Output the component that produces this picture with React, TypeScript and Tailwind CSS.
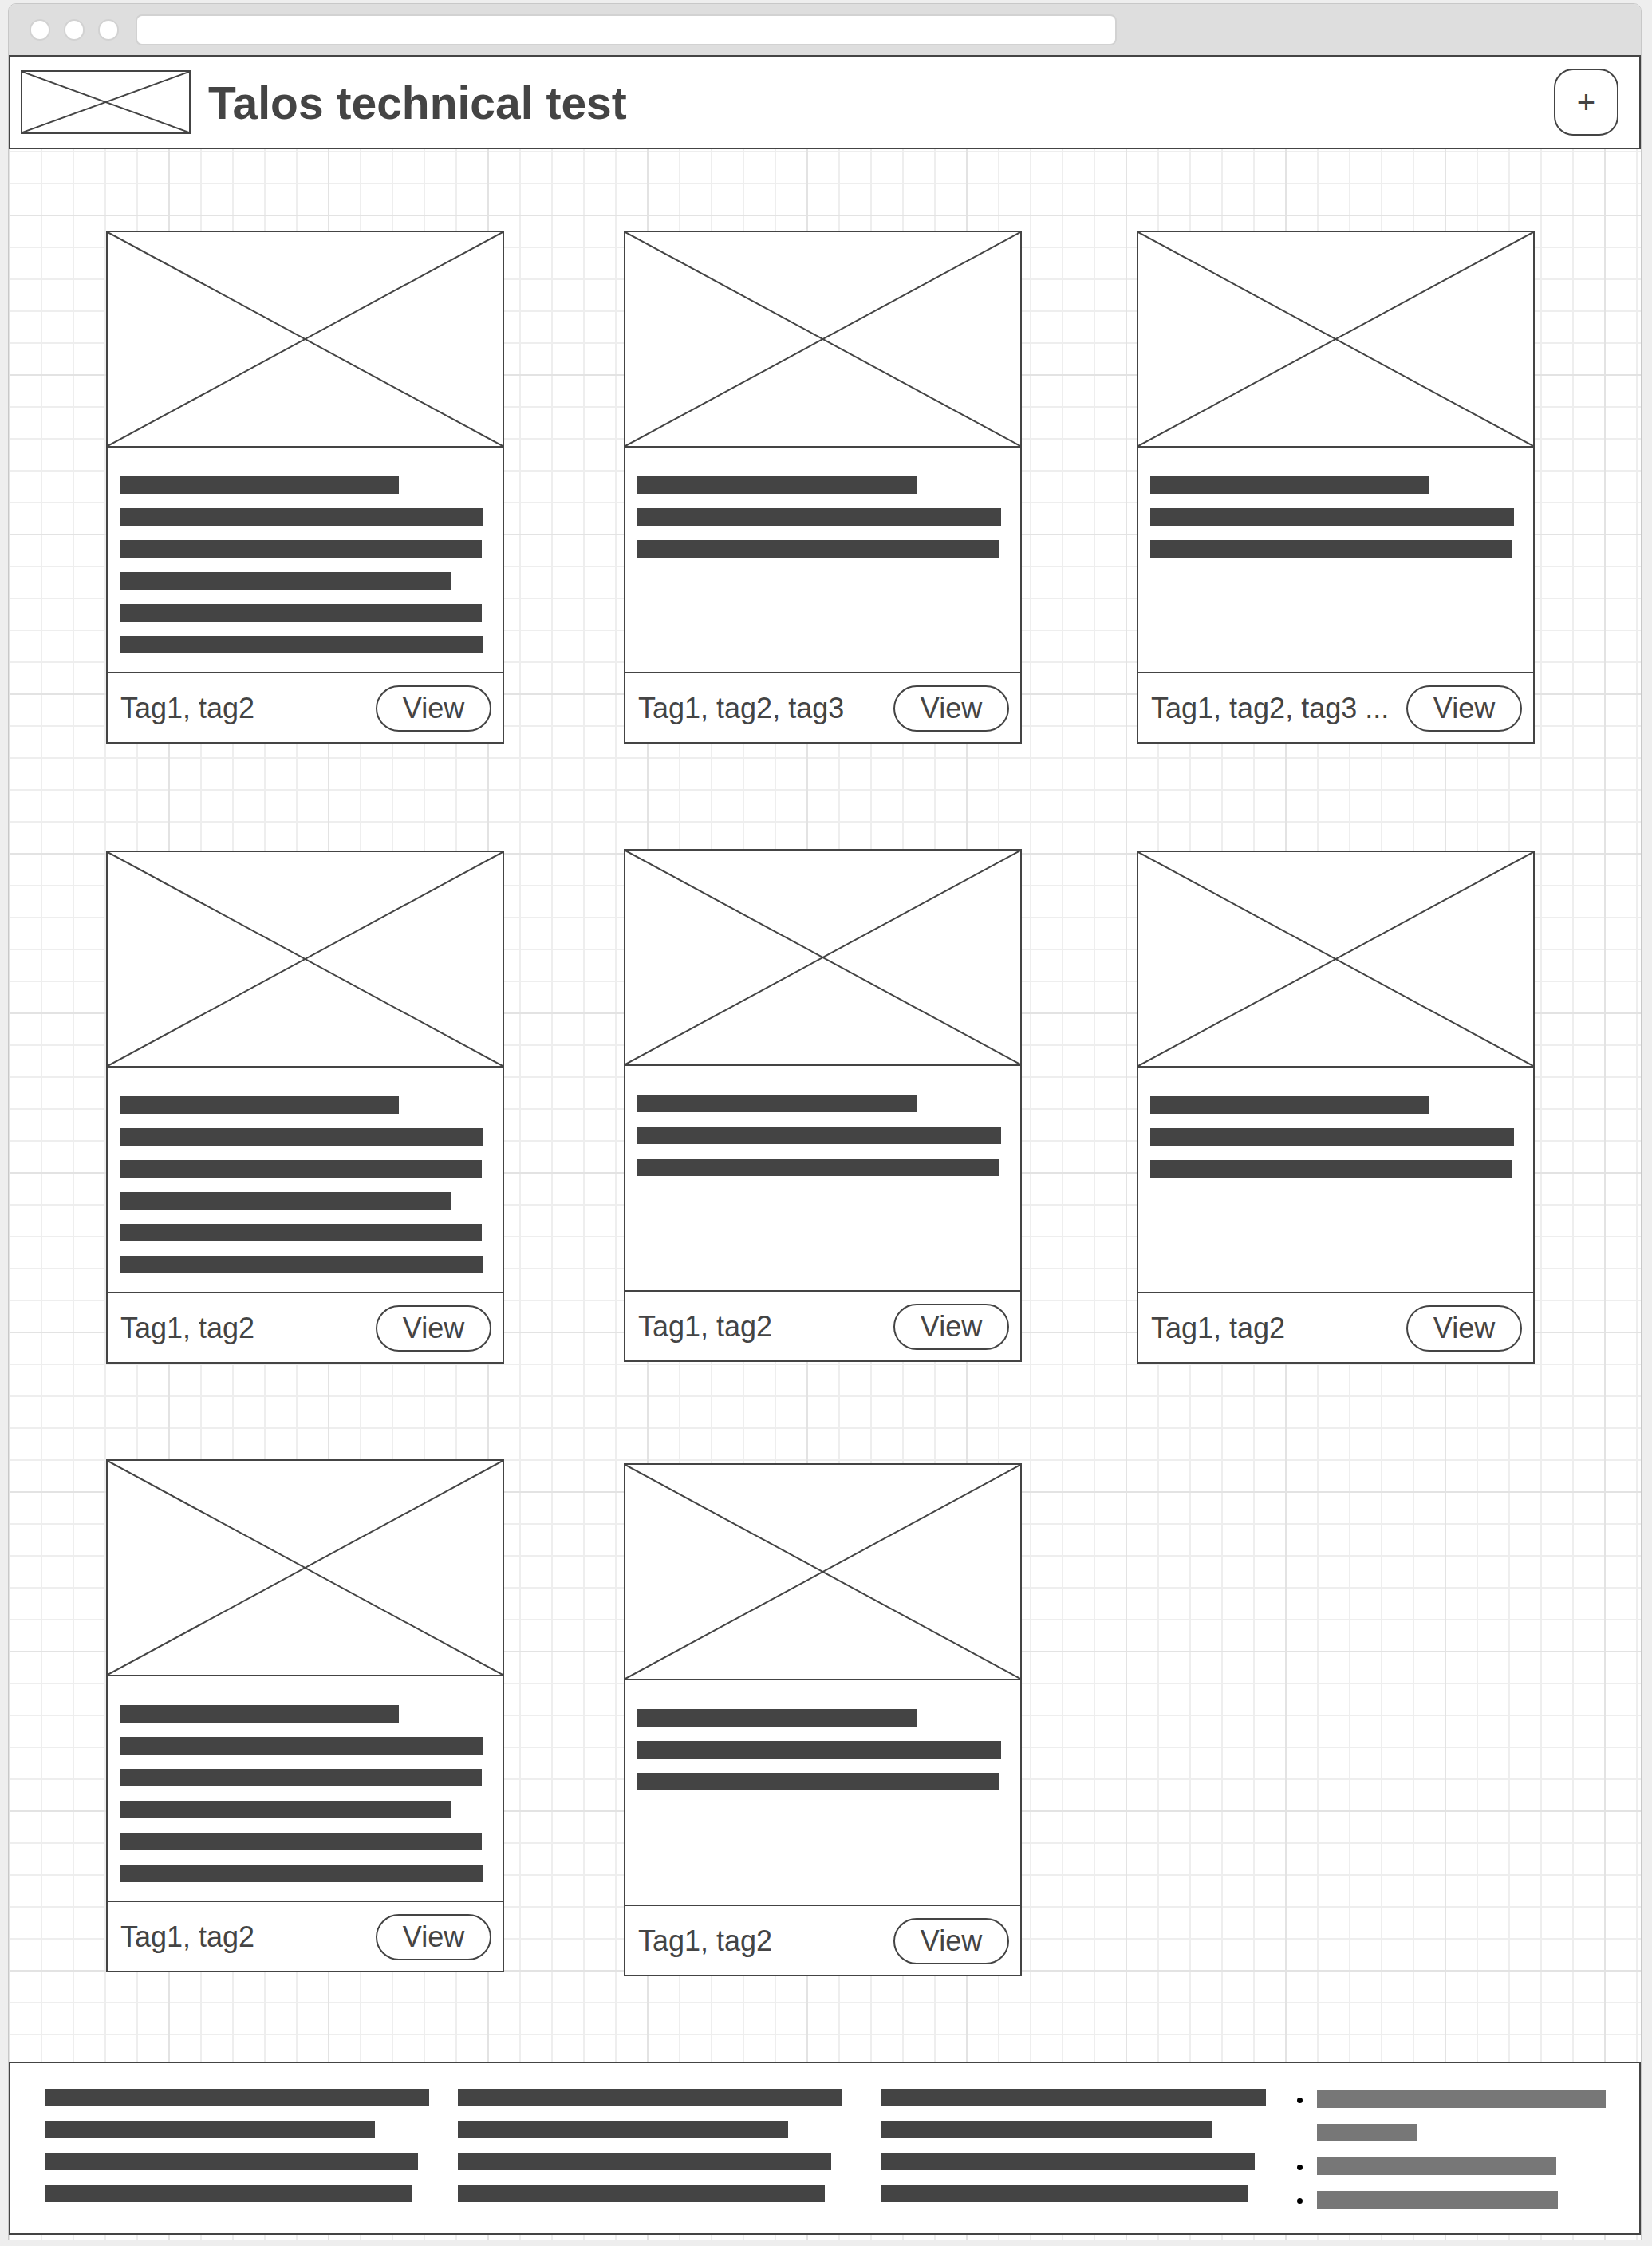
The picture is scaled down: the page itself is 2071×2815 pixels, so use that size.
import React from "react";

type Card = {
  bars: string[];
  tags: string;
  offset?: string;
};

const longBars = ["w-[350px]", "w-[456px]", "w-[454px]", "w-[416px]", "w-[454px]", "w-[456px]"];
const shortBars = ["w-[350px]", "w-[456px]", "w-[454px]"];

// three rows of cards, the wireframe is a bit uneven so a few get nudged
const rows: Card[][] = [
  [
    { bars: longBars, tags: "Tag1, tag2" },
    { bars: shortBars, tags: "Tag1, tag2, tag3" },
    { bars: shortBars, tags: "Tag1, tag2, tag3 ..." },
  ],
  [
    { bars: longBars, tags: "Tag1, tag2", offset: "mt-[2px]" },
    { bars: shortBars, tags: "Tag1, tag2" },
    { bars: shortBars, tags: "Tag1, tag2", offset: "mt-[2px]" },
  ],
  [
    { bars: longBars, tags: "Tag1, tag2" },
    { bars: shortBars, tags: "Tag1, tag2", offset: "mt-[5px]" },
  ],
];

const colWidths = ["w-[649px]", "w-[643px]", "w-[499px]"];

const footerCols = [
  { width: "w-[518px]", bars: ["w-[482px]", "w-[414px]", "w-[468px]", "w-[460px]"] },
  { width: "w-[531px]", bars: ["w-[482px]", "w-[414px]", "w-[468px]", "w-[460px]"] },
  { width: "w-[510px]", bars: ["w-[482px]", "w-[414px]", "w-[468px]", "w-[460px]"] },
];

const listRows = [
  { bullet: true, width: "w-[362px]" },
  { bullet: false, width: "w-[126px]" },
  { bullet: true, width: "w-[300px]" },
  { bullet: true, width: "w-[302px]" },
];

function Cross() {
  return (
    <svg className="block h-full w-full" viewBox="0 0 100 100" preserveAspectRatio="none">
      <line x1="0" y1="0" x2="100" y2="100" stroke="#444" strokeWidth="2" vectorEffect="non-scaling-stroke" />
      <line x1="100" y1="0" x2="0" y2="100" stroke="#444" strokeWidth="2" vectorEffect="non-scaling-stroke" />
    </svg>
  );
}

function PostCard({ card }: { card: Card }) {
  return (
    <div className={`flex w-[499px] flex-col border-2 border-[#444] bg-white ${card.offset ?? ""}`}>
      <div className="h-[270px] border-b-2 border-[#444]">
        <Cross />
      </div>
      <div className="flex h-[283px] flex-col gap-[18px] border-b-2 border-[#444] pl-[15px] pt-[36px]">
        {card.bars.map((w, i) => (
          <div key={i} className={`h-[22px] bg-[#444] ${w}`} />
        ))}
      </div>
      <div className="flex h-[86px] items-center justify-between pl-[16px] pr-[14px] pt-[2px]">
        <span className="text-[36px] leading-none text-[#444]">{card.tags}</span>
        <button className="flex h-[58px] w-[145px] items-center justify-center rounded-full border-2 border-[#444] text-[36px] leading-none text-[#444]">
          View
        </button>
      </div>
    </div>
  );
}

export default function App() {
  return (
    <div className="h-[2815px] w-[2071px] bg-[#eeeeee] pt-[4px] pl-[10px] font-['Liberation_Sans',Arial,sans-serif]">
      <div className="w-[2048px] overflow-hidden rounded-t-[10px] border border-[#c8c8c8]">
        {/* browser chrome */}
        <div className="flex h-[64px] items-center bg-[#dedede] pl-[26px]">
          <div className="flex gap-[17px]">
            <div className="h-[27px] w-[26px] rounded-full border-2 border-[#d2d2d2] bg-white" />
            <div className="h-[27px] w-[26px] rounded-full border-2 border-[#d2d2d2] bg-white" />
            <div className="h-[27px] w-[26px] rounded-full border-2 border-[#d2d2d2] bg-white" />
          </div>
          <div className="ml-[21px] h-[39px] w-[1230px] rounded-[8px] border-2 border-[#d2d2d2] bg-white" />
        </div>

        <div className="bg-white bg-[linear-gradient(to_right,#e3e3e3_2px,transparent_2px),linear-gradient(to_bottom,#e3e3e3_2px,transparent_2px),linear-gradient(to_right,#eeeeee_2px,transparent_2px),linear-gradient(to_bottom,#eeeeee_2px,transparent_2px)] bg-[length:200px_200px,200px_200px,40px_40px,40px_40px] pb-[6px]">
          {/* header */}
          <header className="flex h-[118px] items-center border-2 border-[#444] bg-white pl-[13px] pr-[26px]">
            <div className="h-[80px] w-[213px] border-2 border-[#444]">
              <Cross />
            </div>
            <h1 className="ml-[22px] mt-[2px] text-[57px] font-bold leading-none text-[#444]">Talos technical test</h1>
            <button className="ml-auto flex h-[84px] w-[81px] items-center justify-center rounded-[24px] border-2 border-[#444] text-[40px] font-light leading-none text-[#444]">
              +
            </button>
          </header>

          {/* cards */}
          <main className="flex h-[2397px] flex-col pl-[122px] pt-[102px]">
            {rows.map((row, r) => (
              <div
                key={r}
                className={`flex items-start ${r === 1 ? "mt-[132px]" : ""} ${r === 2 ? "mt-[120px]" : ""}`}
              >
                {row.map((card, c) => (
                  <div key={c} className={colWidths[c]}>
                    <PostCard card={card} />
                  </div>
                ))}
              </div>
            ))}
          </main>

          {/* footer */}
          <footer className="flex h-[217px] border-2 border-[#444] bg-white pl-[43px] pt-[32px]">
            {footerCols.map((col, i) => (
              <div key={i} className={`flex flex-col gap-[18px] ${col.width}`}>
                {col.bars.map((w, j) => (
                  <div key={j} className={`h-[22px] bg-[#444] ${w}`} />
                ))}
              </div>
            ))}
            <ul className="mt-[2px] flex flex-col gap-[20px]">
              {listRows.map((row, i) => (
                <li key={i} className="flex items-center">
                  <div className="flex w-[36px] pl-[11px] pt-[3px]">
                    {row.bullet && <div className="h-[7px] w-[7px] rounded-full bg-black" />}
                  </div>
                  <div className={`h-[22px] bg-[#777] ${row.width}`} />
                </li>
              ))}
            </ul>
          </footer>
        </div>
      </div>
    </div>
  );
}
